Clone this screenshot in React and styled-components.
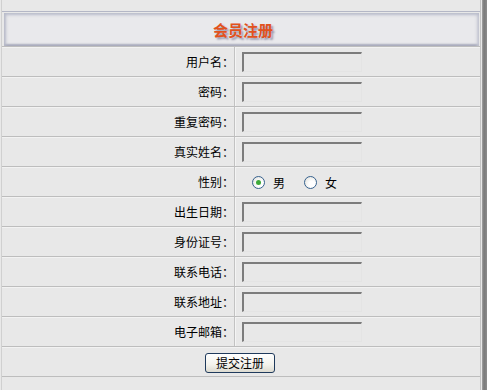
import React, { Component } from 'react';
import styled, { createGlobalStyle } from 'styled-components';

const GlobalStyle = createGlobalStyle`
  html, body {
    margin: 0;
    padding: 0;
    background: #e8e8e8;
  }
  body {
    font-family: "Noto Sans CJK SC", "DejaVu Sans", sans-serif;
    font-size: 12px;
    color: #000;
  }
`;

const Page = styled.div`
  display: flex;
  width: 487px;
  height: 390px;
  overflow: hidden;
`;

const Table = styled.div`
  display: flex;
  flex-direction: column;
  width: 478px;
  margin-left: 1px;
  border-left: 1px solid #d0d0d0;
  border-right: 1px solid #c4c4c4;
  padding-top: 11px;
`;

const ScrollEdge = styled.div`
  width: 5px;
  margin-left: 1px;
  background: linear-gradient(to right, #a4a4a4, #7a7a7a 40%, #8c8c8c);
`;

const HeaderWrap = styled.div`
  border-top: 1px solid #b4b7c6;
  padding: 1px 1px 0 2px;
`;

const Header = styled.div`
  height: 33px;
  display: flex;
  align-items: center;
  justify-content: center;
  background: #e9e9ec;
  box-shadow:
    inset 0 3px 3px -1px #b9bccb,
    inset 4px 0 3px -2px #b7bac9,
    inset -4px 0 3px -2px #c3c5d2,
    inset 0 -3px 2px -1px #a7aabb;
`;

const Title = styled.div`
  font-size: 15px;
  font-weight: bold;
  color: #e2521d;
  text-shadow: 2px 2px 2px #9a9aae;
  margin-left: 3px;
`;

const Row = styled.div`
  display: grid;
  grid-template-columns: 233px 1fr;
  height: 29px;
  border-top: 1px solid #bdbdbd;
  box-shadow: inset 0 1px 0 #f2f2f2;
`;

const Label = styled.div`
  display: flex;
  align-items: center;
  justify-content: flex-end;
  border-right: 1px solid #c2c2c2;
  box-shadow: 1px 0 0 #f4f4f4;
  white-space: nowrap;
`;

const Field = styled.div`
  display: flex;
  align-items: center;
  padding-left: 7px;
`;

const TextInput = styled.input`
  box-sizing: border-box;
  width: 120px;
  height: 20px;
  margin: 1px 0 0 0;
  background: transparent;
  border-style: solid;
  border-width: 2px 1px 1px 2px;
  border-color: #7c7c7c #e4e4e4 #e4e4e4 #7c7c7c;
  outline: none;
`;

const RadioGroup = styled.div`
  display: flex;
  align-items: center;
  padding-left: 17px;
  padding-top: 1px;
`;

const RadioOption = styled.label`
  display: flex;
  align-items: center;
  gap: 8px;
  margin-right: 19px;
`;

const RadioDot = styled.span`
  box-sizing: border-box;
  width: 13px;
  height: 13px;
  border-radius: 50%;
  border: 1px solid #36618e;
  background: radial-gradient(circle at 65% 65%, #ffffff 30%, #dcdcd6 100%);
  display: flex;
  align-items: center;
  justify-content: center;

  &::after {
    content: '';
    width: 5px;
    height: 5px;
    border-radius: 50%;
    background: ${p => (p.checked ? '#3ea93a' : 'transparent')};
  }
`;

const ButtonRow = styled.div`
  display: flex;
  align-items: center;
  height: 29px;
  border-top: 1px solid #bdbdbd;
  border-bottom: 1px solid #bdbdbd;
  box-shadow: inset 0 1px 0 #f2f2f2;
  padding-left: 203px;
`;

const Submit = styled.button`
  box-sizing: border-box;
  width: 70px;
  height: 20px;
  padding: 0;
  margin-top: 2px;
  font-family: "Noto Sans CJK SC", "DejaVu Sans", sans-serif;
  font-size: 12px;
  line-height: 16px;
  color: #000;
  border: 1px solid #1f3a5c;
  border-radius: 3px;
  background: linear-gradient(to bottom, #ffffff, #f3f2ec 60%, #dcdad0);
`;

const fields = ['用户名', '密码', '重复密码', '真实姓名'];
const fields2 = ['出生日期', '身份证号', '联系电话', '联系地址', '电子邮箱'];

class App extends Component {
  state = { sex: 'male' };

  renderField = (name) => (
    <Row key={name}>
      <Label>{name}：</Label>
      <Field>
        <TextInput type={name.includes('密码') ? 'password' : 'text'} />
      </Field>
    </Row>
  );

  render() {
    return (
      <Page>
        <GlobalStyle />
        <Table>
          <HeaderWrap>
            <Header>
              <Title>会员注册</Title>
            </Header>
          </HeaderWrap>
          {fields.map(this.renderField)}
          <Row>
            <Label>性别：</Label>
            <RadioGroup>
              <RadioOption onClick={() => this.setState({ sex: 'male' })}>
                <RadioDot checked={this.state.sex === 'male'} />男
              </RadioOption>
              <RadioOption onClick={() => this.setState({ sex: 'female' })}>
                <RadioDot checked={this.state.sex === 'female'} />女
              </RadioOption>
            </RadioGroup>
          </Row>
          {fields2.map(this.renderField)}
          <ButtonRow>
            <Submit>提交注册</Submit>
          </ButtonRow>
        </Table>
        <ScrollEdge />
      </Page>
    );
  }
}

export default App;
